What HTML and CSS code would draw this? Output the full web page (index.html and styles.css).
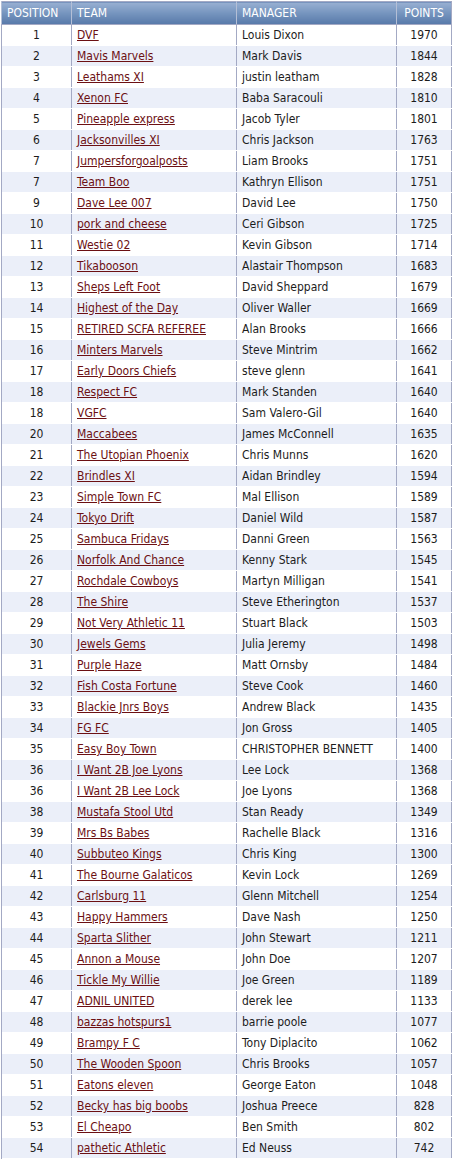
FILE: index.html
```html
<!DOCTYPE html>
<html>
<head>
<meta charset="utf-8">
<link rel="stylesheet" href="styles.css">
</head>
<body>
<table class="league">
<thead>
<tr><th class="pos">POSITION</th><th class="team">TEAM</th><th class="mgr">MANAGER</th><th class="pts">POINTS</th></tr>
</thead>
<tbody>
<tr><td class="pos">1</td><td class="team"><a href="#">DVF</a></td><td class="mgr">Louis Dixon</td><td class="pts">1970</td></tr>
<tr><td class="pos">2</td><td class="team"><a href="#">Mavis Marvels</a></td><td class="mgr">Mark Davis</td><td class="pts">1844</td></tr>
<tr><td class="pos">3</td><td class="team"><a href="#">Leathams XI</a></td><td class="mgr">justin leatham</td><td class="pts">1828</td></tr>
<tr><td class="pos">4</td><td class="team"><a href="#">Xenon FC</a></td><td class="mgr">Baba Saracouli</td><td class="pts">1810</td></tr>
<tr><td class="pos">5</td><td class="team"><a href="#">Pineapple express</a></td><td class="mgr">Jacob Tyler</td><td class="pts">1801</td></tr>
<tr><td class="pos">6</td><td class="team"><a href="#">Jacksonvilles XI</a></td><td class="mgr">Chris Jackson</td><td class="pts">1763</td></tr>
<tr><td class="pos">7</td><td class="team"><a href="#">Jumpersforgoalposts</a></td><td class="mgr">Liam Brooks</td><td class="pts">1751</td></tr>
<tr><td class="pos">7</td><td class="team"><a href="#">Team Boo</a></td><td class="mgr">Kathryn Ellison</td><td class="pts">1751</td></tr>
<tr><td class="pos">9</td><td class="team"><a href="#">Dave Lee 007</a></td><td class="mgr">David Lee</td><td class="pts">1750</td></tr>
<tr><td class="pos">10</td><td class="team"><a href="#">pork and cheese</a></td><td class="mgr">Ceri Gibson</td><td class="pts">1725</td></tr>
<tr><td class="pos">11</td><td class="team"><a href="#">Westie 02</a></td><td class="mgr">Kevin Gibson</td><td class="pts">1714</td></tr>
<tr><td class="pos">12</td><td class="team"><a href="#">Tikabooson</a></td><td class="mgr">Alastair Thompson</td><td class="pts">1683</td></tr>
<tr><td class="pos">13</td><td class="team"><a href="#">Sheps Left Foot</a></td><td class="mgr">David Sheppard</td><td class="pts">1679</td></tr>
<tr><td class="pos">14</td><td class="team"><a href="#">Highest of the Day</a></td><td class="mgr">Oliver Waller</td><td class="pts">1669</td></tr>
<tr><td class="pos">15</td><td class="team"><a href="#">RETIRED SCFA REFEREE</a></td><td class="mgr">Alan Brooks</td><td class="pts">1666</td></tr>
<tr><td class="pos">16</td><td class="team"><a href="#">Minters Marvels</a></td><td class="mgr">Steve Mintrim</td><td class="pts">1662</td></tr>
<tr><td class="pos">17</td><td class="team"><a href="#">Early Doors Chiefs</a></td><td class="mgr">steve glenn</td><td class="pts">1641</td></tr>
<tr><td class="pos">18</td><td class="team"><a href="#">Respect FC</a></td><td class="mgr">Mark Standen</td><td class="pts">1640</td></tr>
<tr><td class="pos">18</td><td class="team"><a href="#">VGFC</a></td><td class="mgr">Sam Valero-Gil</td><td class="pts">1640</td></tr>
<tr><td class="pos">20</td><td class="team"><a href="#">Maccabees</a></td><td class="mgr">James McConnell</td><td class="pts">1635</td></tr>
<tr><td class="pos">21</td><td class="team"><a href="#">The Utopian Phoenix</a></td><td class="mgr">Chris Munns</td><td class="pts">1620</td></tr>
<tr><td class="pos">22</td><td class="team"><a href="#">Brindles XI</a></td><td class="mgr">Aidan Brindley</td><td class="pts">1594</td></tr>
<tr><td class="pos">23</td><td class="team"><a href="#">Simple Town FC</a></td><td class="mgr">Mal Ellison</td><td class="pts">1589</td></tr>
<tr><td class="pos">24</td><td class="team"><a href="#">Tokyo Drift</a></td><td class="mgr">Daniel Wild</td><td class="pts">1587</td></tr>
<tr><td class="pos">25</td><td class="team"><a href="#">Sambuca Fridays</a></td><td class="mgr">Danni Green</td><td class="pts">1563</td></tr>
<tr><td class="pos">26</td><td class="team"><a href="#">Norfolk And Chance</a></td><td class="mgr">Kenny Stark</td><td class="pts">1545</td></tr>
<tr><td class="pos">27</td><td class="team"><a href="#">Rochdale Cowboys</a></td><td class="mgr">Martyn Milligan</td><td class="pts">1541</td></tr>
<tr><td class="pos">28</td><td class="team"><a href="#">The Shire</a></td><td class="mgr">Steve Etherington</td><td class="pts">1537</td></tr>
<tr><td class="pos">29</td><td class="team"><a href="#">Not Very Athletic 11</a></td><td class="mgr">Stuart Black</td><td class="pts">1503</td></tr>
<tr><td class="pos">30</td><td class="team"><a href="#">Jewels Gems</a></td><td class="mgr">Julia Jeremy</td><td class="pts">1498</td></tr>
<tr><td class="pos">31</td><td class="team"><a href="#">Purple Haze</a></td><td class="mgr">Matt Ornsby</td><td class="pts">1484</td></tr>
<tr><td class="pos">32</td><td class="team"><a href="#">Fish Costa Fortune</a></td><td class="mgr">Steve Cook</td><td class="pts">1460</td></tr>
<tr><td class="pos">33</td><td class="team"><a href="#">Blackie Jnrs Boys</a></td><td class="mgr">Andrew Black</td><td class="pts">1435</td></tr>
<tr><td class="pos">34</td><td class="team"><a href="#">FG FC</a></td><td class="mgr">Jon Gross</td><td class="pts">1405</td></tr>
<tr><td class="pos">35</td><td class="team"><a href="#">Easy Boy Town</a></td><td class="mgr">CHRISTOPHER BENNETT</td><td class="pts">1400</td></tr>
<tr><td class="pos">36</td><td class="team"><a href="#">I Want 2B Joe Lyons</a></td><td class="mgr">Lee Lock</td><td class="pts">1368</td></tr>
<tr><td class="pos">36</td><td class="team"><a href="#">I Want 2B Lee Lock</a></td><td class="mgr">Joe Lyons</td><td class="pts">1368</td></tr>
<tr><td class="pos">38</td><td class="team"><a href="#">Mustafa Stool Utd</a></td><td class="mgr">Stan Ready</td><td class="pts">1349</td></tr>
<tr><td class="pos">39</td><td class="team"><a href="#">Mrs Bs Babes</a></td><td class="mgr">Rachelle Black</td><td class="pts">1316</td></tr>
<tr><td class="pos">40</td><td class="team"><a href="#">Subbuteo Kings</a></td><td class="mgr">Chris King</td><td class="pts">1300</td></tr>
<tr><td class="pos">41</td><td class="team"><a href="#">The Bourne Galaticos</a></td><td class="mgr">Kevin Lock</td><td class="pts">1269</td></tr>
<tr><td class="pos">42</td><td class="team"><a href="#">Carlsburg 11</a></td><td class="mgr">Glenn Mitchell</td><td class="pts">1254</td></tr>
<tr><td class="pos">43</td><td class="team"><a href="#">Happy Hammers</a></td><td class="mgr">Dave Nash</td><td class="pts">1250</td></tr>
<tr><td class="pos">44</td><td class="team"><a href="#">Sparta Slither</a></td><td class="mgr">John Stewart</td><td class="pts">1211</td></tr>
<tr><td class="pos">45</td><td class="team"><a href="#">Annon a Mouse</a></td><td class="mgr">John Doe</td><td class="pts">1207</td></tr>
<tr><td class="pos">46</td><td class="team"><a href="#">Tickle My Willie</a></td><td class="mgr">Joe Green</td><td class="pts">1189</td></tr>
<tr><td class="pos">47</td><td class="team"><a href="#">ADNIL UNITED</a></td><td class="mgr">derek lee</td><td class="pts">1133</td></tr>
<tr><td class="pos">48</td><td class="team"><a href="#">bazzas hotspurs1</a></td><td class="mgr">barrie poole</td><td class="pts">1077</td></tr>
<tr><td class="pos">49</td><td class="team"><a href="#">Brampy F C</a></td><td class="mgr">Tony Diplacito</td><td class="pts">1062</td></tr>
<tr><td class="pos">50</td><td class="team"><a href="#">The Wooden Spoon</a></td><td class="mgr">Chris Brooks</td><td class="pts">1057</td></tr>
<tr><td class="pos">51</td><td class="team"><a href="#">Eatons eleven</a></td><td class="mgr">George Eaton</td><td class="pts">1048</td></tr>
<tr><td class="pos">52</td><td class="team"><a href="#">Becky has big boobs</a></td><td class="mgr">Joshua Preece</td><td class="pts">828</td></tr>
<tr><td class="pos">53</td><td class="team"><a href="#">El Cheapo</a></td><td class="mgr">Ben Smith</td><td class="pts">802</td></tr>
<tr><td class="pos">54</td><td class="team"><a href="#">pathetic Athletic</a></td><td class="mgr">Ed Neuss</td><td class="pts">742</td></tr>
</tbody>
</table>
</body>
</html>
```
FILE: styles.css
```css
html, body {
  margin: 0;
  padding: 0;
  background: #ffffff;
}
body {
  padding: 1px 2px 0 1px;
}
.league {
  width: 451px;
  border-collapse: collapse;
  table-layout: fixed;
  font-family: "DejaVu Sans Condensed", "DejaVu Sans", sans-serif;
  font-size: 12px;
  color: #1c1c1c;
  border: 1px solid #a3a9c4;
}
.league th {
  height: 22px;
  padding: 0 0 0 5px;
  text-align: left;
  font-weight: normal;
  color: #ffffff;
  background: linear-gradient(#98b0d2, #7594be 50%, #5779a9);
  border-left: 1px solid #b4bfd6;
  border-bottom: 1px solid #a3a9c4;
  vertical-align: middle;
}
.league th.pos {
  width: 64px;
}
.league th.team {
  width: 159px;
}
.league th.mgr {
  width: 154px;
}
.league th.pts {
  text-align: center;
  padding: 0;
}
.league td {
  height: 20px;
  padding: 0 0 0 5px;
  border-left: 1px solid #a3a9c4;
  border-bottom: 1px solid transparent;
  vertical-align: middle;
  white-space: nowrap;
  overflow: hidden;
}
.league td.pos,
.league td.pts {
  text-align: center;
  padding: 0;
}
.league tbody tr:nth-child(even) td {
  background: #ebeff9;
}
.league a {
  color: #6c1013;
  text-decoration: underline;
}
```
